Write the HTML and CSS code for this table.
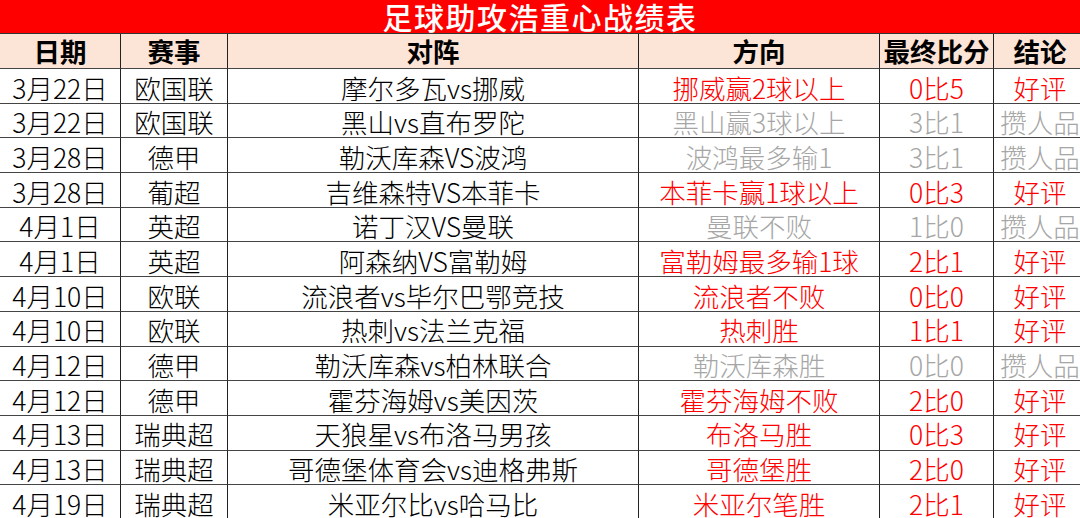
FILE: index.html
```html
<!DOCTYPE html>
<html lang="zh-CN">
<head>
<meta charset="utf-8">
<title>足球助攻浩重心战绩表</title>
<link rel="stylesheet" href="styles.css">
</head>
<body>
<div class="sheet">
  <div class="title">足球助攻浩重心战绩表</div>
  <div class="grid">
    <div class="c h">日期</div><div class="c h">赛事</div><div class="c h">对阵</div><div class="c h">方向</div><div class="c h">最终比分</div><div class="c h last">结论</div>

    <div class="c">3月22日</div><div class="c">欧国联</div><div class="c">摩尔多瓦vs挪威</div><div class="c red">挪威赢2球以上</div><div class="c red">0比5</div><div class="c red last">好评</div>
    <div class="c">3月22日</div><div class="c">欧国联</div><div class="c">黑山vs直布罗陀</div><div class="c gray">黑山赢3球以上</div><div class="c gray">3比1</div><div class="c gray last">攒人品</div>
    <div class="c">3月28日</div><div class="c">德甲</div><div class="c">勒沃库森VS波鸿</div><div class="c gray">波鸿最多输1</div><div class="c gray">3比1</div><div class="c gray last">攒人品</div>
    <div class="c">3月28日</div><div class="c">葡超</div><div class="c">吉维森特VS本菲卡</div><div class="c red">本菲卡赢1球以上</div><div class="c red">0比3</div><div class="c red last">好评</div>
    <div class="c">4月1日</div><div class="c">英超</div><div class="c">诺丁汉VS曼联</div><div class="c gray">曼联不败</div><div class="c gray">1比0</div><div class="c gray last">攒人品</div>
    <div class="c">4月1日</div><div class="c">英超</div><div class="c">阿森纳VS富勒姆</div><div class="c red">富勒姆最多输1球</div><div class="c red">2比1</div><div class="c red last">好评</div>
    <div class="c">4月10日</div><div class="c">欧联</div><div class="c">流浪者vs毕尔巴鄂竞技</div><div class="c red">流浪者不败</div><div class="c red">0比0</div><div class="c red last">好评</div>
    <div class="c">4月10日</div><div class="c">欧联</div><div class="c">热刺vs法兰克福</div><div class="c red">热刺胜</div><div class="c red">1比1</div><div class="c red last">好评</div>
    <div class="c">4月12日</div><div class="c">德甲</div><div class="c">勒沃库森vs柏林联合</div><div class="c gray">勒沃库森胜</div><div class="c gray">0比0</div><div class="c gray last">攒人品</div>
    <div class="c">4月12日</div><div class="c">德甲</div><div class="c">霍芬海姆vs美因茨</div><div class="c red">霍芬海姆不败</div><div class="c red">2比0</div><div class="c red last">好评</div>
    <div class="c">4月13日</div><div class="c">瑞典超</div><div class="c">天狼星vs布洛马男孩</div><div class="c red">布洛马胜</div><div class="c red">0比3</div><div class="c red last">好评</div>
    <div class="c">4月13日</div><div class="c">瑞典超</div><div class="c">哥德堡体育会vs迪格弗斯</div><div class="c red">哥德堡胜</div><div class="c red">2比0</div><div class="c red last">好评</div>
    <div class="c">4月19日</div><div class="c">瑞典超</div><div class="c">米亚尔比vs哈马比</div><div class="c red">米亚尔笔胜</div><div class="c red">2比1</div><div class="c red last">好评</div>
  </div>
</div>
</body>
</html>
```

FILE: styles.css
```css
html, body {
  margin: 0;
  padding: 0;
  background: #ffffff;
  overflow: hidden;
}

body {
  width: 1080px;
  height: 518px;
  font-family: "Noto Sans CJK SC", "Noto Sans", sans-serif;
  color: #000000;
}

.sheet {
  width: 1080px;
}

.title {
  height: 33px;
  background: #ff0000;
  color: #ffffff;
  font-size: 30px;
  font-weight: 500;
  line-height: 33px;
  text-align: center;
  letter-spacing: 1.5px;
  border-bottom: 1px solid #333333;
}

.grid {
  display: grid;
  grid-template-columns: 121px 107px 411px 241px 114px 86px;
  grid-template-rows: 35px;
  grid-auto-rows: 34.7px;
}

.c {
  display: flex;
  align-items: center;
  justify-content: center;
  box-sizing: border-box;
  border-right: 1px solid #222222;
  border-bottom: 1px solid #444444;
  font-size: 26.5px;
  font-weight: 300;
  line-height: 1;
  white-space: nowrap;
  padding-top: 4px;
}

.c.last {
  border-right: none;
  overflow: visible;
  padding-left: 6px;
}

.h {
  background: #fce4d6;
  font-weight: bold;
  padding-top: 1px;
}

.red {
  color: #ff0000;
}

.gray {
  color: #a6a6a6;
}
```
